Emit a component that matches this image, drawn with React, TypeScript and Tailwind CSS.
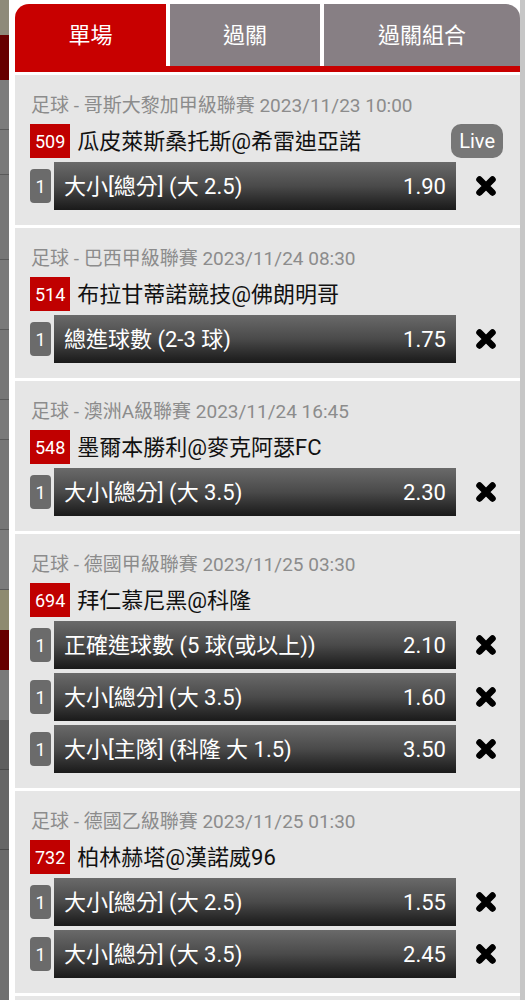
import React from "react";

type Bet = { label: string; odds: string };
type Match = { league: string; no: string; name: string; live?: boolean; bets: Bet[] };

const matches: Match[] = [
  {
    league: "足球 - 哥斯大黎加甲級聯賽 2023/11/23 10:00",
    no: "509",
    name: "瓜皮萊斯桑托斯@希雷迪亞諾",
    live: true,
    bets: [{ label: "大小[總分] (大 2.5)", odds: "1.90" }],
  },
  {
    league: "足球 - 巴西甲級聯賽 2023/11/24 08:30",
    no: "514",
    name: "布拉甘蒂諾競技@佛朗明哥",
    bets: [{ label: "總進球數 (2-3 球)", odds: "1.75" }],
  },
  {
    league: "足球 - 澳洲A級聯賽 2023/11/24 16:45",
    no: "548",
    name: "墨爾本勝利@麥克阿瑟FC",
    bets: [{ label: "大小[總分] (大 3.5)", odds: "2.30" }],
  },
  {
    league: "足球 - 德國甲級聯賽 2023/11/25 03:30",
    no: "694",
    name: "拜仁慕尼黑@科隆",
    bets: [
      { label: "正確進球數 (5 球(或以上))", odds: "2.10" },
      { label: "大小[總分] (大 3.5)", odds: "1.60" },
      { label: "大小[主隊] (科隆 大 1.5)", odds: "3.50" },
    ],
  },
  {
    league: "足球 - 德國乙級聯賽 2023/11/25 01:30",
    no: "732",
    name: "柏林赫塔@漢諾威96",
    bets: [
      { label: "大小[總分] (大 2.5)", odds: "1.55" },
      { label: "大小[總分] (大 3.5)", odds: "2.45" },
    ],
  },
];

const CloseIcon = () => (
  <svg width="24" height="22" viewBox="0 0 24 22">
    <path d="M5.5 4.5 L18.5 17.5 M18.5 4.5 L5.5 17.5" stroke="#000" strokeWidth="6.5" strokeLinecap="round" />
  </svg>
);

const BetRow = ({ bet }: { bet: Bet }) => (
  <div className="flex items-center h-[48px]">
    <div className="w-[21px] h-[34px] ml-[15px] rounded-[4px] bg-[#6b6b6b] text-white text-[18px] flex items-center justify-center">1</div>
    <div className="ml-[3px] w-[402px] h-[48px] flex items-center justify-between px-[10px] text-white text-[22px] bg-gradient-to-b from-[#6a6a6a] via-[#4a4a4a] to-[#1a1a1a]">
      <span>{bet.label}</span>
      <span>{bet.odds}</span>
    </div>
    <div className="flex-1 flex justify-center pr-[4px]">
      <CloseIcon />
    </div>
  </div>
);

const MatchCard = ({ m }: { m: Match }) => (
  <div className="bg-[#e6e6e6] border-b-[3px] border-white pt-[18px] pb-[15px]">
    <div className="pl-[16px] text-[19px] leading-[26px] text-[#8c8c8c]">{m.league}</div>
    <div className="flex items-center mt-[5px] h-[34px]">
      <div className="ml-[15px] h-[34px] px-[5px] bg-[#c00000] text-white text-[18px] flex items-center">{m.no}</div>
      <div className="ml-[7px] text-[22px] text-[#111]">{m.name}</div>
      {m.live && (
        <div className="ml-auto mr-[17px] h-[34px] px-[8px] rounded-[10px] bg-[#777777] text-white text-[20px] flex items-center">Live</div>
      )}
    </div>
    <div className="flex flex-col gap-[4px] mt-[4px]">
      {m.bets.map((b, i) => (
        <BetRow key={i} bet={b} />
      ))}
    </div>
  </div>
);

export default function App() {
  return (
    <div
      className="flex w-[525px] h-[1000px] overflow-hidden bg-white"
      style={{ fontFamily: 'Roboto, "Noto Sans CJK TC", sans-serif' }}
    >
      <div className="w-[9px] flex flex-col">
        <div className="h-[35px] bg-[#8e8a7a]" />
        <div className="h-[45px] bg-[#660000]" />
        <div className="h-[50px] bg-[#7c7c7c] border-b border-[#5a5a5a]" />
        <div className="h-[45px] bg-[#7a7a7a] border-b border-[#5a5a5a]" />
        <div className="h-[85px] bg-[#777777] border-b border-[#5a5a5a]" />
        <div className="h-[70px] bg-[#7a7a7a] border-b border-[#5a5a5a]" />
        <div className="h-[70px] bg-[#777777] border-b border-[#5a5a5a]" />
        <div className="h-[40px] bg-[#7a7a7a] border-b border-[#5a5a5a]" />
        <div className="h-[90px] bg-[#777777] border-b border-[#5a5a5a]" />
        <div className="h-[60px] bg-[#7c7c7c] border-b border-[#5a5a5a]" />
        <div className="h-[40px] bg-[#8e8a70]" />
        <div className="h-[40px] bg-[#660000]" />
        <div className="h-[50px] bg-[#7a7a7a]" />
        <div className="h-[50px] bg-[#5f5f5f] border-b border-[#4a4a4a]" />
        <div className="h-[80px] bg-[#666666] border-b border-[#4a4a4a]" />
        <div className="h-[60px] bg-[#6a6a6a]" />
        <div className="flex-1 bg-[#707070]" />
      </div>
      <div className="w-[6px] bg-white" />
      <div className="w-[505px] flex flex-col">
        <div className="flex gap-[4px] pt-[4px] bg-white">
          <div className="w-[151px] h-[62px] rounded-tl-[14px] bg-[#c80000] text-white text-[22px] flex items-center justify-center">單場</div>
          <div className="w-[150px] h-[62px] bg-[#877f84] text-white text-[22px] flex items-center justify-center">過關</div>
          <div className="w-[196px] h-[62px] rounded-tr-[14px] bg-[#877f84] text-white text-[22px] flex items-center justify-center">過關組合</div>
        </div>
        <div className="h-[6px] bg-[#c80000]" />
        <div className="h-[3px] bg-white" />
        {matches.map((m) => (
          <MatchCard key={m.no} m={m} />
        ))}
        <div className="flex-1 bg-[#e6e6e6]" />
      </div>
      <div className="w-[5px] bg-[#c6c6c6]" />
    </div>
  );
}
